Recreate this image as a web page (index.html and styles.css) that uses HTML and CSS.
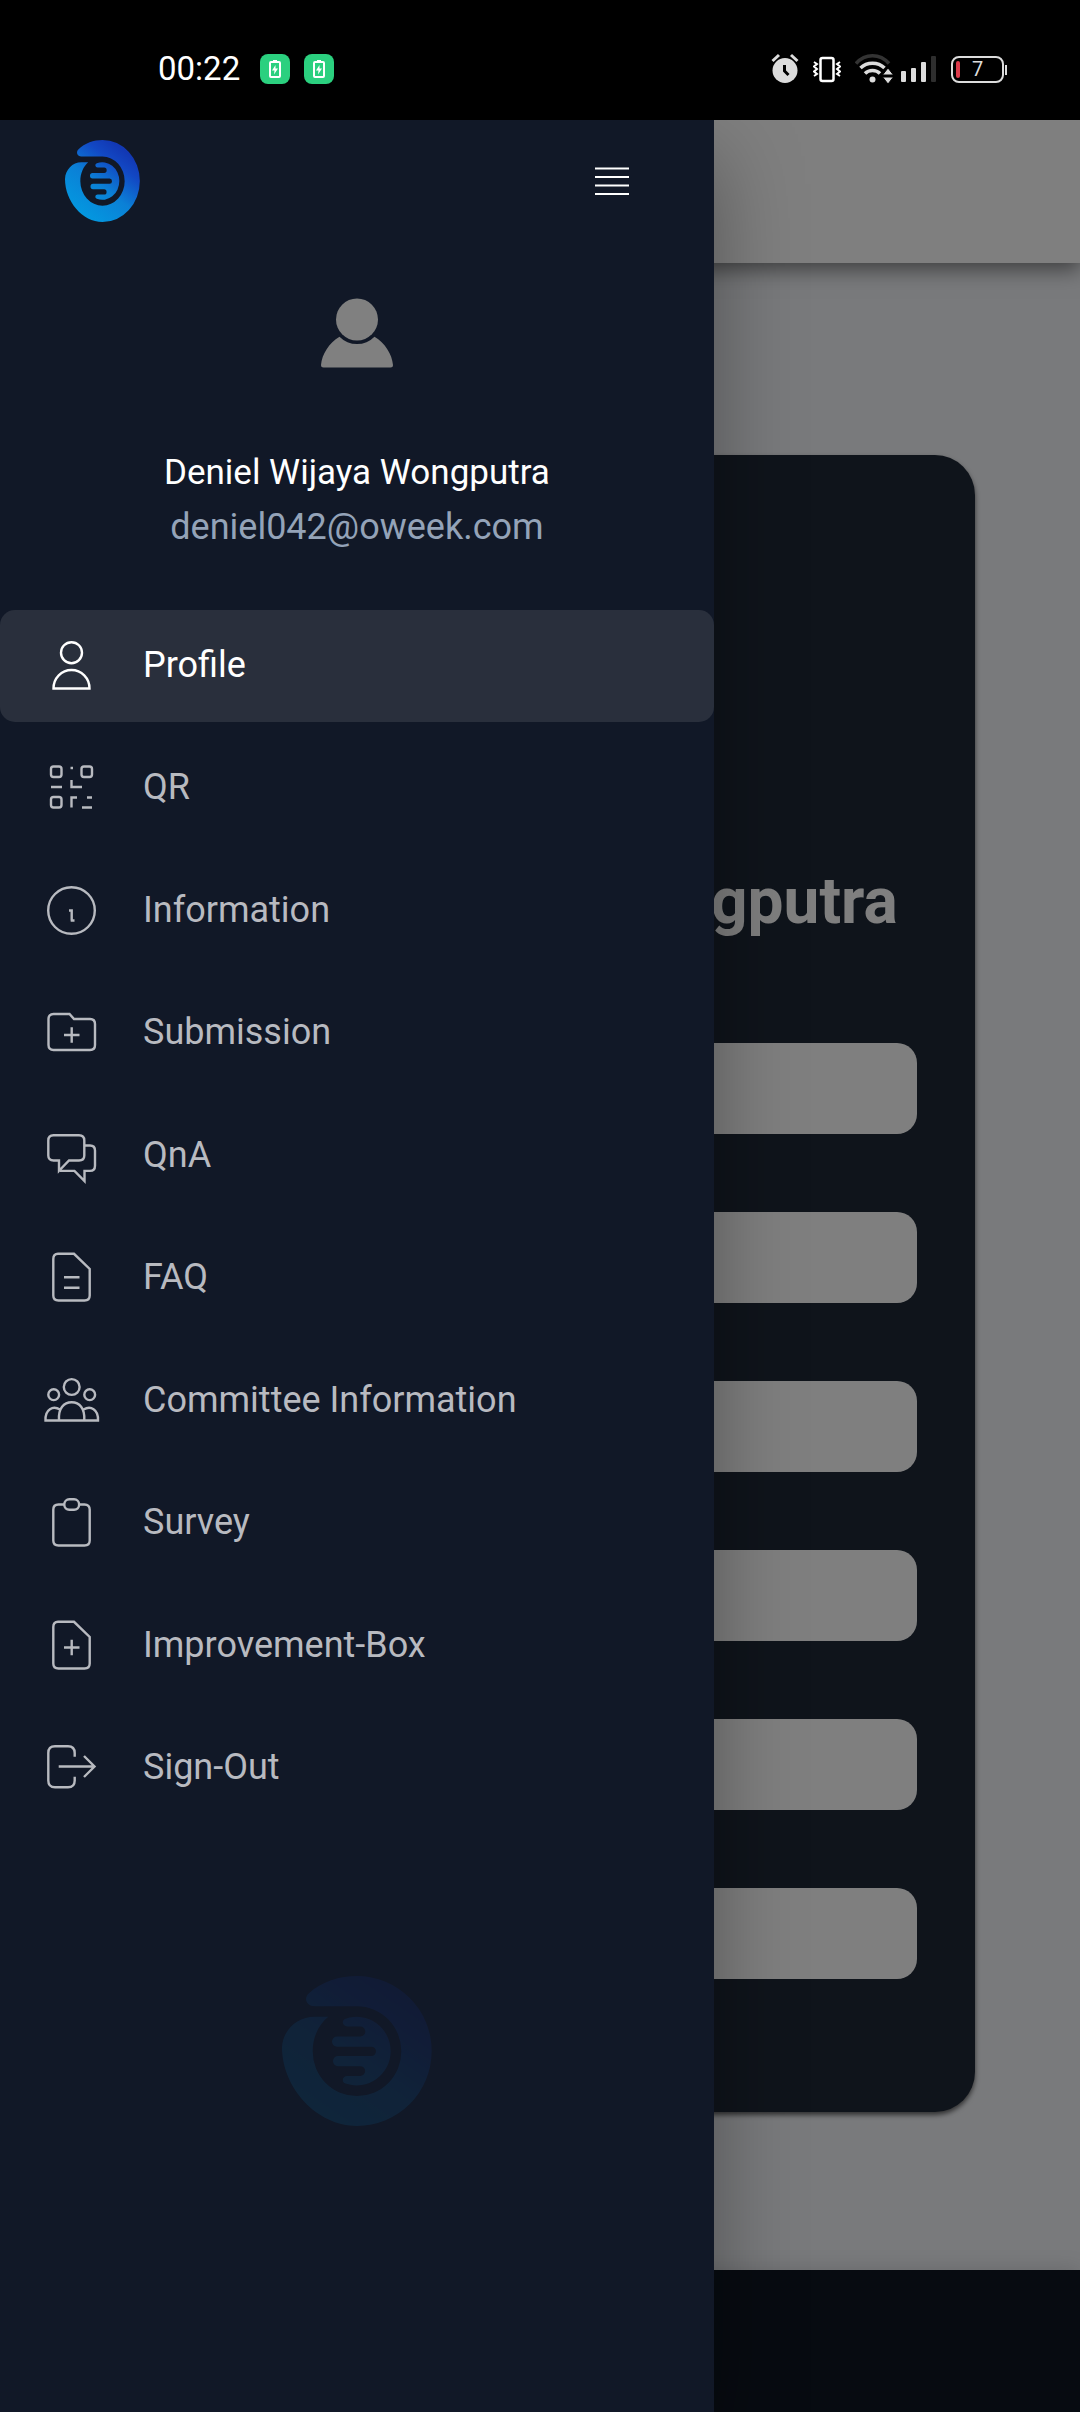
FILE: index.html
```html
<!DOCTYPE html>
<html lang="en">
<head>
<meta charset="utf-8">
<meta name="viewport" content="width=device-width, initial-scale=1">
<title>Profile</title>
<link rel="stylesheet" href="styles.css">
</head>
<body>
<svg class="defs" width="0" height="0" aria-hidden="true">
  <defs>
    <linearGradient id="brand" x1="0.2" y1="0.9" x2="0.75" y2="0.1">
      <stop offset="0" stop-color="#0398e0"/>
      <stop offset="0.45" stop-color="#0b80d6"/>
      <stop offset="0.8" stop-color="#1248c4"/>
      <stop offset="1" stop-color="#1238b4"/>
    </linearGradient>
    <symbol id="logo" viewBox="66 78 450 446" preserveAspectRatio="none">
      <path fill="url(#brand)" d="M164 168C140 168 130 145 146 130C184 94 240 78 291 78A224 223 0 0 1 515 301A224 223 0 0 1 291 524C170 524 66 410 66 290C68 240 110 199 165 199H205C176 222 158 260 158 302A133 133 0 0 0 424 302A133 134 0 0 0 291 168ZM262 228C247 228 243 209 257 205A102 102 0 1 1 257 398C243 393 247 375 262 375H301A14 14 0 0 0 301 346H234A15 15 0 0 1 234 316H334A14 14 0 0 0 334 288H231A15 15 0 0 1 231 258H301A15 15 0 0 0 301 228Z"/>
    </symbol>
    <symbol id="charge" viewBox="0 0 30 30">
      <rect width="30" height="30" rx="8" fill="#2bd07f"/>
      <path d="M13 7.500h4" stroke="#fff" stroke-width="3"/>
      <rect x="10" y="8" width="10" height="15" rx="1" fill="none" stroke="#fff" stroke-width="2"/>
      <path fill="#fff" d="M15.500 11L12 16.500h2.500L14 20.500l4-6h-2.500z"/>
    </symbol>
  </defs>
</svg>

<header class="status">
  <div class="status-side">
    <time class="clock">00:22</time>
    <svg class="chip" aria-hidden="true"><use href="#charge"/></svg>
    <svg class="chip" aria-hidden="true"><use href="#charge"/></svg>
  </div>
  <div class="status-side status-right">
    <svg width="28" height="32" viewBox="0 0 28 32" aria-hidden="true">
      <circle cx="14" cy="17.500" r="12.500" fill="#dcdcdc"/>
      <path d="M1.500 8L8 2M20 2l6.500 6" stroke="#dcdcdc" stroke-width="3" fill="none"/>
      <path d="M13.500 12v6l4 4" stroke="#000" stroke-width="3" fill="none"/>
    </svg>
    <svg width="28" height="32" viewBox="0 0 28 32" aria-hidden="true" fill="none" stroke="#fff">
      <rect x="7.500" y="5" width="13" height="23" rx="2" stroke-width="2.500"/>
      <path stroke-width="2" d="M1 9l3 2-3 2.500 3 2.500-3 2.500 3 2.500-3 2M27 9l-3 2 3 2.500-3 2.500 3 2.500-3 2.500 3 2"/>
    </svg>
    <svg width="38" height="32" viewBox="0 0 38 32" aria-hidden="true" fill="none" stroke-width="3.500">
      <path stroke="#333" d="M1 10.500C10 0 25 0 34 10.500"/>
      <path stroke="#dcdcdc" d="M5.500 15C12 8.500 23 8.500 29.500 15M10 20.500C14 16.500 21 16.500 25 20.500"/>
      <circle cx="17.500" cy="26.500" r="3" fill="#dcdcdc"/>
      <path fill="#dcdcdc" stroke="#000" stroke-width="1" d="M33 15l5.500 7h-11zM33 31l5.500-7h-11z"/>
    </svg>
    <svg class="bars" width="36" height="32" viewBox="0 0 36 32" aria-hidden="true" fill="#dcdcdc">
      <rect y="18" width="5" height="11" rx="1"/><rect x="10" y="15" width="5" height="14" rx="1"/>
      <rect x="20" y="9" width="5" height="20" rx="1"/><rect x="30" y="3" width="5" height="26" rx="1" fill="#2e2e2e"/>
    </svg>
    <div class="battery"><span class="battery-level"></span>7</div>
  </div>
</header>

<div class="screen">
  <div class="page">
    <header class="page-bar"></header>
    <main class="content">
      <section class="card">
        <h1 class="card-title">Deniel Wijaya Wongputra</h1>
        <form class="fields">
          <input class="field" type="text" aria-label="Detail 1" readonly>
          <input class="field" type="text" aria-label="Detail 2" readonly>
          <input class="field" type="text" aria-label="Detail 3" readonly>
          <input class="field" type="text" aria-label="Detail 4" readonly>
          <input class="field" type="text" aria-label="Detail 5" readonly>
          <input class="field" type="text" aria-label="Detail 6" readonly>
        </form>
      </section>
    </main>
    <footer class="page-foot"></footer>
  </div>
  <div class="scrim"></div>

  <aside class="drawer">
    <div class="drawer-head">
      <svg class="logo" aria-hidden="true"><use href="#logo"/></svg>
      <button class="menu" type="button" aria-label="Close menu">
        <svg width="36" height="30" viewBox="0 0 36 30" stroke="#fff" stroke-width="2" aria-hidden="true"><path d="M1 2.500h34M1 11h34M1 19.500h34M1 28h34"/></svg>
      </button>
    </div>
    <div class="user">
      <svg class="avatar" width="72" height="70" viewBox="0 0 72 70" fill="#808080" aria-hidden="true">
        <circle cx="36" cy="21.500" r="21"/>
        <path d="M18.500 38.700C8 45 1 56 0 67Q0 69.500 2.500 69.500H69.500Q72 69.500 72 67C71 56 64 45 53.500 38.700A24.500 24.500 0 0 1 18.500 38.700Z"/>
      </svg>
      <div class="user-name">Deniel Wijaya Wongputra</div>
      <div class="user-mail">deniel042@oweek.com</div>
    </div>
    <nav class="nav">
      <a class="item active" href="#profile"><svg class="icon" viewBox="0 0 60 60" aria-hidden="true"><circle cx="29.500" cy="16.700" r="10.500"/><path d="M11.500 52.500C11.500 42 19.500 34 29.500 34S47.500 42 47.500 52.500Z"/></svg><span class="label">Profile</span></a>
      <a class="item" href="#qr"><svg class="icon" viewBox="0 0 60 60" aria-hidden="true"><rect x="9" y="8.500" width="10.500" height="10.500" rx="2.500"/><rect x="39.500" y="8.500" width="10.500" height="10.500" rx="2.500"/><rect x="9" y="39" width="10.500" height="10.500" rx="2.500"/><path d="M28.500 10H31M9 29H20M29.500 22V29H40M29.500 49.500V39.500H35M45 39.500H50M40 49.500H50"/></svg><span class="label">QR</span></a>
      <a class="item" href="#information"><svg class="icon" viewBox="0 0 60 60" aria-hidden="true"><circle cx="29.500" cy="29.500" r="23.300"/><path d="M27 29.500H29.700V39.500M28.700 39.500H32.500"/></svg><span class="label">Information</span></a>
      <a class="item" href="#submission"><svg class="icon" viewBox="0 0 60 60" aria-hidden="true"><path d="M6.500 16Q6.500 11 11.500 11H27.500L32 16H48Q53 16 53 21V42Q53 47 48 47H11.500Q6.500 47 6.500 42ZM22 32H37.500M29.700 24.300V39.700"/></svg><span class="label">Submission</span></a>
      <a class="item" href="#qna"><svg class="icon" viewBox="0 0 60 60" aria-hidden="true"><path d="M11.500 9.200H37Q42.300 9.200 42.300 14.500V29.500Q42.300 34.500 37 34.500H27L17 44.800V34.500H11.500Q6.300 34.500 6.300 29.500V14.500Q6.300 9.200 11.500 9.200ZM42.500 19.500H48Q53 19.500 53 24.500V39.800Q53 44.900 48 44.900H42.500V55L32.500 44.900H18"/></svg><span class="label">QnA</span></a>
      <a class="item" href="#faq"><svg class="icon" viewBox="0 0 60 60" aria-hidden="true"><path d="M16 5.800H32L47.700 21V47.500Q47.700 52.500 42.500 52.500H16.500Q11.300 52.500 11.300 47.500V11Q11.300 5.800 16 5.800ZM22 29.200H37.500M22 39.700H37.500"/></svg><span class="label">FAQ</span></a>
      <a class="item" href="#committee"><svg class="icon" viewBox="0 0 60 60" aria-hidden="true"><circle cx="29.700" cy="16" r="7.900"/><circle cx="11.700" cy="23.700" r="5.400"/><circle cx="47.700" cy="23.700" r="5.400"/><path d="M17 49.500C16 37 22 31.300 29.700 31.300S43 37 42.300 49.500M18 38.500C11 34.500 3 38 3.500 49.500H56C56.500 38 48.500 34.500 41.500 38.500"/></svg><span class="label">Committee Information</span></a>
      <a class="item" href="#survey"><svg class="icon" viewBox="0 0 60 60" aria-hidden="true"><rect x="22.300" y="6.300" width="14.800" height="10.500" rx="5"/><path d="M22 11.500H16.500Q11.300 11.500 11.300 16.500V47.500Q11.300 52.500 16.500 52.500H42.500Q47.700 52.500 47.700 47.500V16.500Q47.700 11.500 42.500 11.500H37.500"/></svg><span class="label">Survey</span></a>
      <a class="item" href="#improvement-box"><svg class="icon" viewBox="0 0 60 60" aria-hidden="true"><path d="M16 5.800H32L47.700 21V47.500Q47.700 52.500 42.500 52.500H16.500Q11.300 52.500 11.300 47.500V11Q11.300 5.800 16 5.800ZM22 31.500H37.500M29.700 23.800V39.200"/></svg><span class="label">Improvement-Box</span></a>
      <a class="item" href="#sign-out"><svg class="icon" viewBox="0 0 60 60" aria-hidden="true"><path d="M32.700 18.700V15Q32.700 8.200 26 8.200H13Q6.300 8.200 6.300 15V42.500Q6.300 49.200 13 49.200H26Q32.700 49.200 32.700 42.500V38.700M16.700 28.500H52.500M42 18L52.500 28.500L42 39"/></svg><span class="label">Sign-Out</span></a>
    </nav>
    <div class="drawer-foot">
      <svg class="watermark" aria-hidden="true"><use href="#logo"/></svg>
    </div>
  </aside>
</div>
</body>
</html>
```

FILE: styles.css
```css
* { box-sizing: border-box; }

body {
  margin: 0;
  min-height: 100vh;
  display: flex;
  flex-direction: column;
  background: #000;
  font-family: Roboto, "Liberation Sans", sans-serif;
  font-size: 36px;
  line-height: 54px;
}

svg { display: block; flex: none; }
.defs { position: absolute; }

/* Status bar */
.status {
  display: flex;
  align-items: center;
  justify-content: space-between;
  height: 120px;
  padding: 18px 72px 0 158px;
  color: #fff;
}
.status-side { display: flex; align-items: center; gap: 14px; }
.clock { margin-right: 6px; font-size: 33px; }
.chip { width: 30px; height: 30px; }
.bars { margin-left: -6px; }
.battery {
  position: relative;
  width: 53px;
  height: 27px;
  margin-right: 4px;
  border: 2px solid #dcdcdc;
  border-radius: 8px;
  color: #dcdcdc;
  font-size: 20px;
  line-height: 23px;
  text-align: center;
}
.battery::after {
  content: "";
  position: absolute;
  top: 7px;
  right: -5px;
  width: 2px;
  height: 10px;
  background: #dcdcdc;
}
.battery-level {
  position: absolute;
  top: 3px;
  left: 3px;
  width: 4px;
  height: 17px;
  border-radius: 2px;
  background: #dc3b4b;
}

/* Drawer and page share one grid cell, the drawer on top */
.screen {
  position: relative;
  flex: 1;
  display: grid;
  overflow: hidden;
}
.page, .drawer { grid-area: 1 / 1; }

/* Page */
.page {
  display: flex;
  flex-direction: column;
  background: #f2f4f8;
}
.page-bar {
  height: 143px;
  background: #fff;
  box-shadow: 0 6px 20px rgba(0, 0, 0, 0.5);
}
.content { flex: 1; padding: 192px 105px 64px; }
.card {
  padding: 410px 58px 133px;
  border-radius: 40px;
  background: #1f2937;
  box-shadow: 0 3px 5px rgba(0, 0, 0, 0.6);
}
.card-title {
  margin: 0 -40px 104px;
  color: #fff;
  font-size: 64px;
  font-weight: 700;
  line-height: 74px;
  text-align: center;
}
.fields { display: flex; flex-direction: column; gap: 78px; }
.field {
  width: 100%;
  height: 91px;
  padding: 0 24px;
  border: 0;
  border-radius: 20px;
  background: #fff;
  font: inherit;
}
.page-foot {
  height: 142px;
  background: #0e1623;
  box-shadow: 0 0 20px rgba(0, 0, 0, 0.15);
}
.scrim {
  position: absolute;
  inset: 0;
  background: rgba(0, 0, 0, 0.5);
}

/* Drawer */
.drawer {
  position: relative;
  display: flex;
  flex-direction: column;
  width: 66.1%;
  background: #111827;
  box-shadow: 0 36px 80px rgba(0, 0, 0, 0.34);
}
.drawer-head {
  display: flex;
  align-items: center;
  justify-content: space-between;
  padding: 20px 84px 0 65px;
}
.logo { width: 75px; height: 82px; }
.menu {
  padding: 0;
  border: 0;
  background: none;
  cursor: pointer;
}
.user {
  display: flex;
  flex-direction: column;
  align-items: center;
  padding: 76px 0 56px;
  color: #fff;
}
.avatar { margin-bottom: 78px; }
.user-name { font-size: 35px; }
.user-mail { color: #94a3b8; }

.nav {
  flex: 1;
  display: flex;
  flex-direction: column;
  justify-content: space-between;
}
.item {
  display: flex;
  align-items: center;
  gap: 41px;
  height: 112px;
  padding-left: 42px;
  border-radius: 15px;
  color: #b8bac0;
  text-decoration: none;
}
.item.active { background: #292f3c; color: #fff; }
.label { padding-bottom: 2px; }
.icon {
  width: 60px;
  height: 60px;
  fill: none;
  stroke: currentColor;
  stroke-width: 2.4;
}
.drawer-foot { display: flex; justify-content: center; padding: 152px 0 286px; }
.watermark { width: 150px; height: 150px; opacity: 0.1; }
```
